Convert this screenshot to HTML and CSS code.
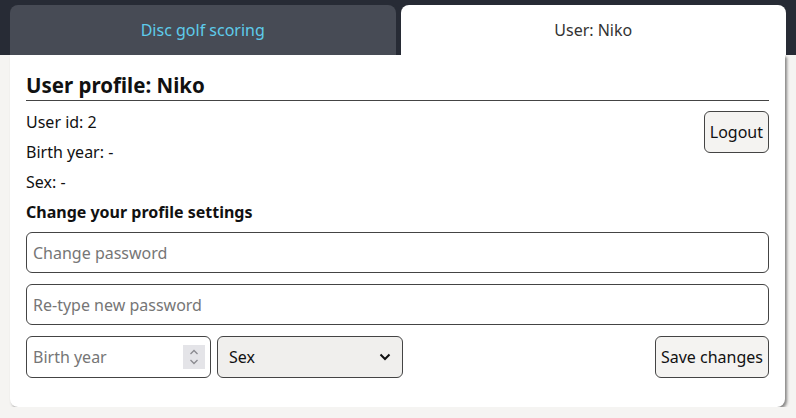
FILE: index.html
```html
<!DOCTYPE html>
<html lang="en">
<head>
<meta charset="utf-8">
<title>User: Niko</title>
<link rel="stylesheet" href="styles.css">
</head>
<body>
<nav class="tabs">
  <div class="tab tab-inactive">Disc golf scoring</div>
  <div class="tab tab-active">User: Niko</div>
</nav>
<main class="card">
  <h1 class="title">User profile: Niko</h1>
  <div class="info">
    <div class="info-rows">
      <p class="row">User id: 2</p>
      <p class="row">Birth year: -</p>
      <p class="row">Sex: -</p>
    </div>
    <button class="btn logout">Logout</button>
  </div>
  <h2 class="subtitle">Change your profile settings</h2>
  <form class="form">
    <input class="field" type="password" placeholder="Change password">
    <input class="field" type="password" placeholder="Re-type new password">
    <div class="form-row">
      <div class="year-wrap">
        <input class="field year" type="text" placeholder="Birth year">
        <span class="spinner">
          <svg width="10" height="18" viewBox="0 0 10 18"><path d="M1.5 6 L5 2.5 L8.5 6" fill="none" stroke="#8a8a90" stroke-width="1.3"/><path d="M1.5 12 L5 15.5 L8.5 12" fill="none" stroke="#8a8a90" stroke-width="1.3"/></svg>
        </span>
      </div>
      <div class="select">
        <span>Sex</span>
        <svg width="12" height="8" viewBox="0 0 12 8"><path d="M1.5 1.5 L6 6 L10.5 1.5" fill="none" stroke="#111" stroke-width="2"/></svg>
      </div>
      <button class="btn save" type="button">Save changes</button>
    </div>
  </form>
</main>
</body>
</html>
```
FILE: styles.css
```css
* { box-sizing: border-box; }
body {
  margin: 0;
  background: #f5f4f2;
  font-family: "Noto Sans", "Open Sans", sans-serif;
  font-size: 16px;
  color: #111;
}
.tabs {
  display: flex;
  gap: 5px;
  height: 55px;
  padding: 5px 10px 0 10px;
  background: #272b35;
}
.tab {
  flex: 1;
  border-radius: 8px 8px 0 0;
  display: flex;
  justify-content: center;
  padding-top: 14px;
  font-size: 16px;
}
.tab-inactive {
  background: #474b55;
  color: #5ecbeb;
}
.tab-active {
  background: #fff;
  color: #333;
}
.card {
  margin: 0 11px 0 10px;
  background: #fff;
  border-radius: 0 0 8px 8px;
  box-shadow: 2px 2px 3px rgba(0,0,0,0.45);
  padding: 16px 16px 29px 16px;
}
.title {
  margin: 0;
  font-size: 20.5px;
  font-weight: 700;
  line-height: 29px;
  border-bottom: 1px solid #444;
}
.info {
  display: flex;
  justify-content: space-between;
  align-items: flex-start;
  padding-top: 6px;
}
.row {
  margin: 0;
  line-height: 30px;
}
.btn {
  font-family: inherit;
  font-size: 16px;
  color: #111;
  background: #f4f3f1;
  border: 1px solid #444;
  border-radius: 6px;
  height: 42px;
  padding: 0 5px;
}
.logout { margin-top: 4px; }
.subtitle {
  margin: 0;
  font-size: 16px;
  font-weight: 700;
  line-height: 30px;
}
.form {
  display: flex;
  flex-direction: column;
  gap: 11px;
  margin-top: 5px;
}
.field {
  height: 41px;
  border: 1px solid #444;
  border-radius: 6px;
  font-family: inherit;
  font-size: 16px;
  padding: 0 6px;
  background: #fff;
  outline: none;
}
.field::placeholder { color: #767676; }
.form-row {
  display: flex;
  gap: 6px;
  align-items: center;
}
.year-wrap {
  position: relative;
  width: 185px;
}
.year { width: 100%; height: 42px; }
.spinner {
  position: absolute;
  right: 6px;
  top: 9px;
  width: 22px;
  height: 24px;
  background: #e4e4e8;
  display: flex;
  align-items: center;
  justify-content: center;
}
.select {
  width: 186px;
  height: 42px;
  border: 1px solid #444;
  border-radius: 6px;
  background: #f0efed;
  display: flex;
  align-items: center;
  justify-content: space-between;
  padding: 0 11px 0 11px;
}
.save {
  margin-left: auto;
}
```
